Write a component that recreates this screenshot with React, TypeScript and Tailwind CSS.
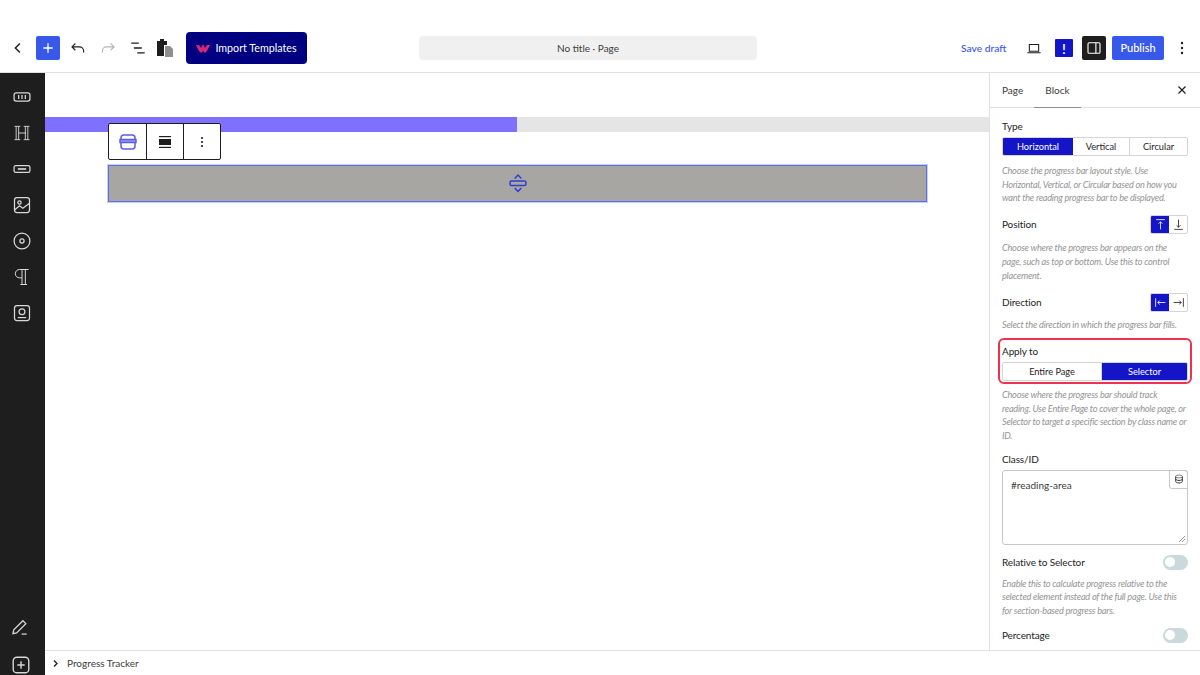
import React from "react";

const S = ({ w = 20, h = 20, vb = "0 0 24 24", children, className = "" }: any) => (
  <svg width={w} height={h} viewBox={vb} fill="none" stroke="currentColor" strokeWidth={1.5} className={className}>
    {children}
  </svg>
);

const Help = ({ children, className = "" }: any) => (
  <p className={`text-[9.2px] tracking-[-0.24px] leading-[13.7px] italic text-[#949494] whitespace-nowrap ${className}`}>{children}</p>
);

const Label = ({ children, className = "" }: any) => (
  <div className={`text-[10px] tracking-[-0.12px] leading-[14px] text-[#1e1e1e] ${className}`}>{children}</div>
);

const Toggle = () => (
  <div className="w-[25px] h-[15px] rounded-full bg-[#c9d9dc] flex items-center pl-[2px]">
    <div className="w-[10px] h-[10px] rounded-full bg-white" />
  </div>
);

function Rail() {
  return (
    <aside className="w-[45px] shrink-0 bg-[#1e1e1e] flex flex-col items-center text-[#d8d8d8] pr-[1px]">
      <div className="mt-[14px] flex flex-col items-center gap-[16px]">
        <S><rect x="2.5" y="7" width="19" height="10" rx="2.5" /><path d="M8 9.5v5M12 9.5v5M16 9.5v5" /></S>
        <S><path d="M3 4h7M3 20h7M14 4h7M14 20h7M5 4v16M8 4v16M8 12h9M16 4v16M19 4v16" strokeWidth="1.1" /></S>
        <S><rect x="2.5" y="8" width="19" height="8" rx="2" /><path d="M7 12h10" strokeWidth="2" /></S>
        <S><rect x="3" y="3" width="18" height="18" rx="3" /><circle cx="9" cy="9" r="2" /><path d="M3 18l6-5 4 3 8-6" /></S>
        <S><circle cx="12" cy="12" r="9.5" /><circle cx="12" cy="12" r="2.5" /></S>
        <S><path d="M20 3H9a5 5 0 0 0 0 10h3M12 3v18M16 3v18M10 21h8" strokeWidth="1.2" /></S>
        <S><rect x="3" y="3" width="18" height="18" rx="3" /><circle cx="12" cy="10.5" r="3.5" /><path d="M7 17.5h10" /></S>
      </div>
      <div className="mt-auto flex flex-col items-center gap-[17px]">
        <S w={20} h={20} className="-translate-x-[2px]"><path d="M3.5 20l1-4.5L15.5 4.5l3.5 3.5L8 19z" /><path d="M14 20.5h6" /></S>
        <S w={22} h={22} className="-mb-[1px] -translate-x-[1px]"><rect x="3.5" y="3.5" width="17" height="17" rx="4" /><path d="M12 8v8M8 12h8" /></S>
      </div>
    </aside>
  );
}

function Seg({ items, active, cols }: any) {
  return (
    <div className={`grid ${cols} h-[19px] rounded-[2px] border border-[#d5d5d5] overflow-hidden text-[9.2px]`}>
      {items.map((t: string, i: number) => (
        <div
          key={t}
          className={`flex items-center justify-center ${i === active ? "bg-[#1515c8] text-white" : "text-[#1e1e1e]"} ${i > 0 ? "border-l border-[#d5d5d5]" : ""}`}
        >
          {t}
        </div>
      ))}
    </div>
  );
}

function IconPair({ a, b }: any) {
  return (
    <div className="flex w-[38px] h-[19px] rounded-[2px] border border-[#d5d5d5] overflow-hidden">
      <div className="flex-1 bg-[#1515c8] text-white flex items-center justify-center">{a}</div>
      <div className="flex-1 text-[#1e1e1e] flex items-center justify-center">{b}</div>
    </div>
  );
}

export default function App() {
  return (
    <div className="w-[1200px] h-[675px] overflow-hidden bg-white flex flex-col font-['Lato','Noto_Sans',sans-serif] text-[#1e1e1e]">
      <header className="h-[73px] shrink-0 border-b border-[#e0e0e0] pt-[24px] flex">
        <div className="relative flex-1 h-[48px] flex items-center">
          <div className="w-[36px] flex justify-center text-[#1e1e1e]">
            <S w={18} h={18}><path d="M14.5 6l-6 6 6 6" strokeWidth="2" /></S>
          </div>
          <div className="w-[24px] h-[24px] rounded-[2px] bg-[#3858e9] text-white flex items-center justify-center">
            <S w={16} h={16}><path d="M12 5v14M5 12h14" strokeWidth="2" /></S>
          </div>
          <div className="ml-[7px] w-[22px] flex justify-center">
            <S w={18} h={18}><path d="M8.5 6L4 10.5 8.5 15M4 10.5h10a5.5 5.5 0 0 1 5.5 5.5v2" /></S>
          </div>
          <div className="ml-[8px] w-[22px] flex justify-center text-[#b5b5b5]">
            <S w={18} h={18}><path d="M15.5 6L20 10.5 15.5 15M20 10.5H10A5.5 5.5 0 0 0 4.5 16v2" /></S>
          </div>
          <div className="ml-[8px] w-[22px] flex justify-center">
            <S w={18} h={18}><path d="M3 5.5h10M6.5 12H17M11 18.5h10" strokeWidth="1.7" /></S>
          </div>
          <div className="ml-[6px] w-[22px] flex justify-center -translate-x-[1px]">
            <svg width="18" height="20" viewBox="0 0 18 20">
              <path d="M1 3h3V1h4v2h3v4H8v11H1z" fill="#1e1e1e" />
              <path d="M9 8h5l3 3v8H9z" fill="#8f8f8f" />
            </svg>
          </div>
          <div className="ml-[9px] w-[121px] h-[32px] rounded-[4px] bg-[#000080] text-white flex items-center justify-center gap-[5px] text-[10.7px]">
            <svg width="14" height="9" viewBox="0 0 14 9" fill="#d6277a"><path d="M0 1l3 0 2 3 2-4 2 4 2-3 3 0-3 6-2 2-2-2-2 2-2-2z" /></svg>
            <span className="pt-[1px]">Import Templates</span>
          </div>
          <div className="absolute left-[419px] top-[12px] w-[338px] h-[24px] rounded-[4px] bg-[#f0f0f0] flex items-center justify-center text-[10px] text-[#3c3c3c]">
            No title · Page
          </div>
          <div className="ml-auto flex items-center mr-[6px]">
            <span className="w-[46px] text-[10.3px] text-[#3858e9] font-medium mr-[19px] whitespace-nowrap pt-[2px]">Save draft</span>
            <div className="w-[16px] flex justify-center mr-[13px]">
              <S w={17} h={17}><path d="M5 6h14v10H5zM2 18.5h20" strokeWidth="1.6" /></S>
            </div>
            <div className="w-[18px] h-[18px] bg-[#1515c8] text-white text-[14px] font-semibold flex items-center justify-center rounded-[1px] mr-[9px]">!</div>
            <div className="w-[24px] h-[24px] bg-[#1e1e1e] text-white flex items-center justify-center rounded-[2px] mr-[6px]">
              <S w={18} h={18}><rect x="4" y="5" width="16" height="14" rx="1.5" /><path d="M14.5 5v14" /></S>
            </div>
            <div className="w-[52px] h-[24px] bg-[#3858e9] text-white rounded-[2px] text-[11px] font-medium flex items-center justify-center mr-[6px] pt-[1px]">Publish</div>
            <div className="w-[24px] flex justify-center">
              <svg width="4" height="14" viewBox="0 0 4 14" fill="#1e1e1e"><circle cx="2" cy="2" r="1.2" /><circle cx="2" cy="7" r="1.2" /><circle cx="2" cy="12" r="1.2" /></svg>
            </div>
          </div>
        </div>
      </header>

      <div className="flex flex-1 min-h-0">
        <Rail />
        <div className="flex-1 min-w-0 flex flex-col">
          <div className="flex-1 min-h-0 flex">
            <main className="flex-1 min-w-0 pt-[44px]">
              <div className="h-[15px] bg-[#e5e5e5]">
                <div className="h-full w-[472px] bg-[#8070ff]" />
              </div>
              <div className="relative ml-[63px] w-[819px] h-[37px] mt-[33px] bg-[#a8a6a2] border border-[#5b6ef0] outline outline-1 outline-[#c7cdf7] flex items-center justify-center text-[#2f3fd0]">
                <S w={20} h={20} className="-mt-[2px]">
                  <rect x="2.5" y="9.5" width="19" height="5.5" rx="1.5" strokeWidth="1.8" />
                  <path d="M8 6.5l4-4 4 4M8 18l4 4 4-4" strokeWidth="1.8" />
                </S>
                <div className="absolute left-[-1px] top-[-43px] w-[113px] h-[37px] bg-white border border-[#1e1e1e] rounded-[2px] flex text-[#1e1e1e]">
                  <div className="w-[38px] border-r border-[#1e1e1e] flex items-center justify-center text-[#5a5fe0]">
                    <svg width="18" height="18" viewBox="0 0 18 18" fill="none" stroke="currentColor" strokeWidth="1.5">
                      <path d="M2 5a3 3 0 0 1 3-3h8a3 3 0 0 1 3 3v8a3 3 0 0 1-3 3H5a3 3 0 0 1-3-3z" />
                      <path d="M1 6.5h16v3H1z" fill="#9a94f5" />
                    </svg>
                  </div>
                  <div className="w-[37px] border-r border-[#1e1e1e] flex items-center justify-center">
                    <svg width="12" height="12" viewBox="0 0 12 12" fill="#1e1e1e"><rect y="0" width="12" height="1.2" /><rect y="3" width="12" height="6" /><rect y="10.8" width="12" height="1.2" /></svg>
                  </div>
                  <div className="flex-1 flex items-center justify-center">
                    <svg width="4" height="12" viewBox="0 0 4 12" fill="#1e1e1e"><circle cx="2" cy="2" r="1.1" /><circle cx="2" cy="6" r="1.1" /><circle cx="2" cy="10" r="1.1" /></svg>
                  </div>
                </div>
              </div>
            </main>

            <aside className="w-[211px] shrink-0 border-l border-[#e0e0e0] overflow-hidden">
              <div className="relative h-[35px] border-b border-[#e0e0e0] flex items-stretch pl-[12px] text-[10px] text-[#3c3c3c]">
                <div className="flex items-center w-[21px] mr-[11px] pt-[1px]">Page</div>
                <div className="flex items-center w-[47px] justify-center border-b border-[#8f8f8f] h-[35px] pt-[1px]">Block</div>
                <div className="ml-auto mr-[11px] flex items-center text-[#1e1e1e]">
                  <S w={14} h={14}><path d="M6 6l12 12M18 6L6 18" strokeWidth="2" /></S>
                </div>
              </div>

              <div className="px-[12px] pt-[11px]">
                <Label className="mb-[4px]">Type</Label>
                <div className="grid grid-cols-[70px_56px_58px] h-[19px] rounded-[2px] border border-[#d5d5d5] overflow-hidden text-[9.2px]">
                  <div className="bg-[#1515c8] text-white flex items-center justify-center">Horizontal</div>
                  <div className="flex items-center justify-center">Vertical</div>
                  <div className="flex items-center justify-center border-l border-[#d5d5d5]">Circular</div>
                </div>
                <Help className="mt-[8px]">Choose the progress bar layout style. Use<br />Horizontal, Vertical, or Circular based on how you<br />want the reading progress bar to be displayed.</Help>

                <div className="mt-[10px] flex items-center justify-between h-[19px]">
                  <Label className="pb-[2px]">Position</Label>
                  <IconPair
                    a={<S w={13} h={13}><path d="M4 3h16M12 21V7M8.5 10.5L12 7l3.5 3.5" /></S>}
                    b={<S w={13} h={13}><path d="M4 21h16M12 3v14M8.5 13.5L12 17l3.5-3.5" /></S>}
                  />
                </div>
                <Help className="mt-[7px]">Choose where the progress bar appears on the<br />page, such as top or bottom. Use this to control<br />placement.</Help>

                <div className="mt-[11px] flex items-center justify-between h-[19px]">
                  <Label className="pb-[2px]">Direction</Label>
                  <IconPair
                    a={<S w={13} h={13}><path d="M3 4v16M21 12H7M10.5 8.5L7 12l3.5 3.5" /></S>}
                    b={<S w={13} h={13}><path d="M21 4v16M3 12h14M13.5 8.5L17 12l-3.5 3.5" /></S>}
                  />
                </div>
                <Help className="mt-[6px]">Select the direction in which the progress bar fills.</Help>

                <div className="mt-[6px] -mx-[4px] box-border px-[2px] pt-[4px] h-[46px] border-2 border-[#f0304f] rounded-[6px]">
                  <Label className="mb-[4px]">Apply to</Label>
                  <Seg items={["Entire Page", "Selector"]} active={1} cols="grid-cols-[98px_86px]" />
                </div>
                <Help className="mt-[4px]">Choose where the progress bar should track<br />reading. Use Entire Page to cover the whole page, or<br />Selector to target a specific section by class name or<br />ID.</Help>

                <Label className="mt-[9px]">Class/ID</Label>
                <div className="relative mt-[4px] h-[75px] border border-[#c8c8c8] rounded-[3px] px-[8px] py-[7px] text-[10px] text-[#3c3c3c]">
                  #reading-area
                  <div className="absolute right-[-1px] top-[-1px] w-[19px] h-[19px] border border-[#c8c8c8] rounded-bl-[3px] rounded-tr-[3px] flex items-center justify-center">
                    <S w={10} h={10}><ellipse cx="12" cy="6" rx="8" ry="3.5" /><path d="M4 6v12c0 2 4 3.5 8 3.5s8-1.5 8-3.5V6M4 12c0 2 4 3.5 8 3.5s8-1.5 8-3.5" strokeWidth="2.4" /></S>
                  </div>
                  <svg width="8" height="8" viewBox="0 0 8 8" className="absolute right-[1px] bottom-[1px]" stroke="#777" strokeWidth="0.8"><path d="M1 7l6-6M4 7l3-3" /></svg>
                </div>

                <div className="mt-[10px] flex items-center justify-between h-[15px]">
                  <Label>Relative to Selector</Label>
                  <Toggle />
                </div>
                <Help className="mt-[7px]">Enable this to calculate progress relative to the<br />selected element instead of the full page. Use this<br />for section-based progress bars.</Help>
                <div className="mt-[10px] flex items-center justify-between h-[15px]">
                  <Label>Percentage</Label>
                  <Toggle />
                </div>
              </div>
            </aside>
          </div>
          <footer className="h-[25px] shrink-0 border-t border-[#e0e0e0] flex items-center pl-[6px] text-[10px] text-[#3c3c3c] bg-white">
            <S w={9} h={9} className="text-[#1e1e1e]"><path d="M8 4l8 8-8 8" strokeWidth="3.5" /></S>
            <span className="ml-[7px] pt-[1px]">Progress Tracker</span>
          </footer>
        </div>
      </div>
    </div>
  );
}
